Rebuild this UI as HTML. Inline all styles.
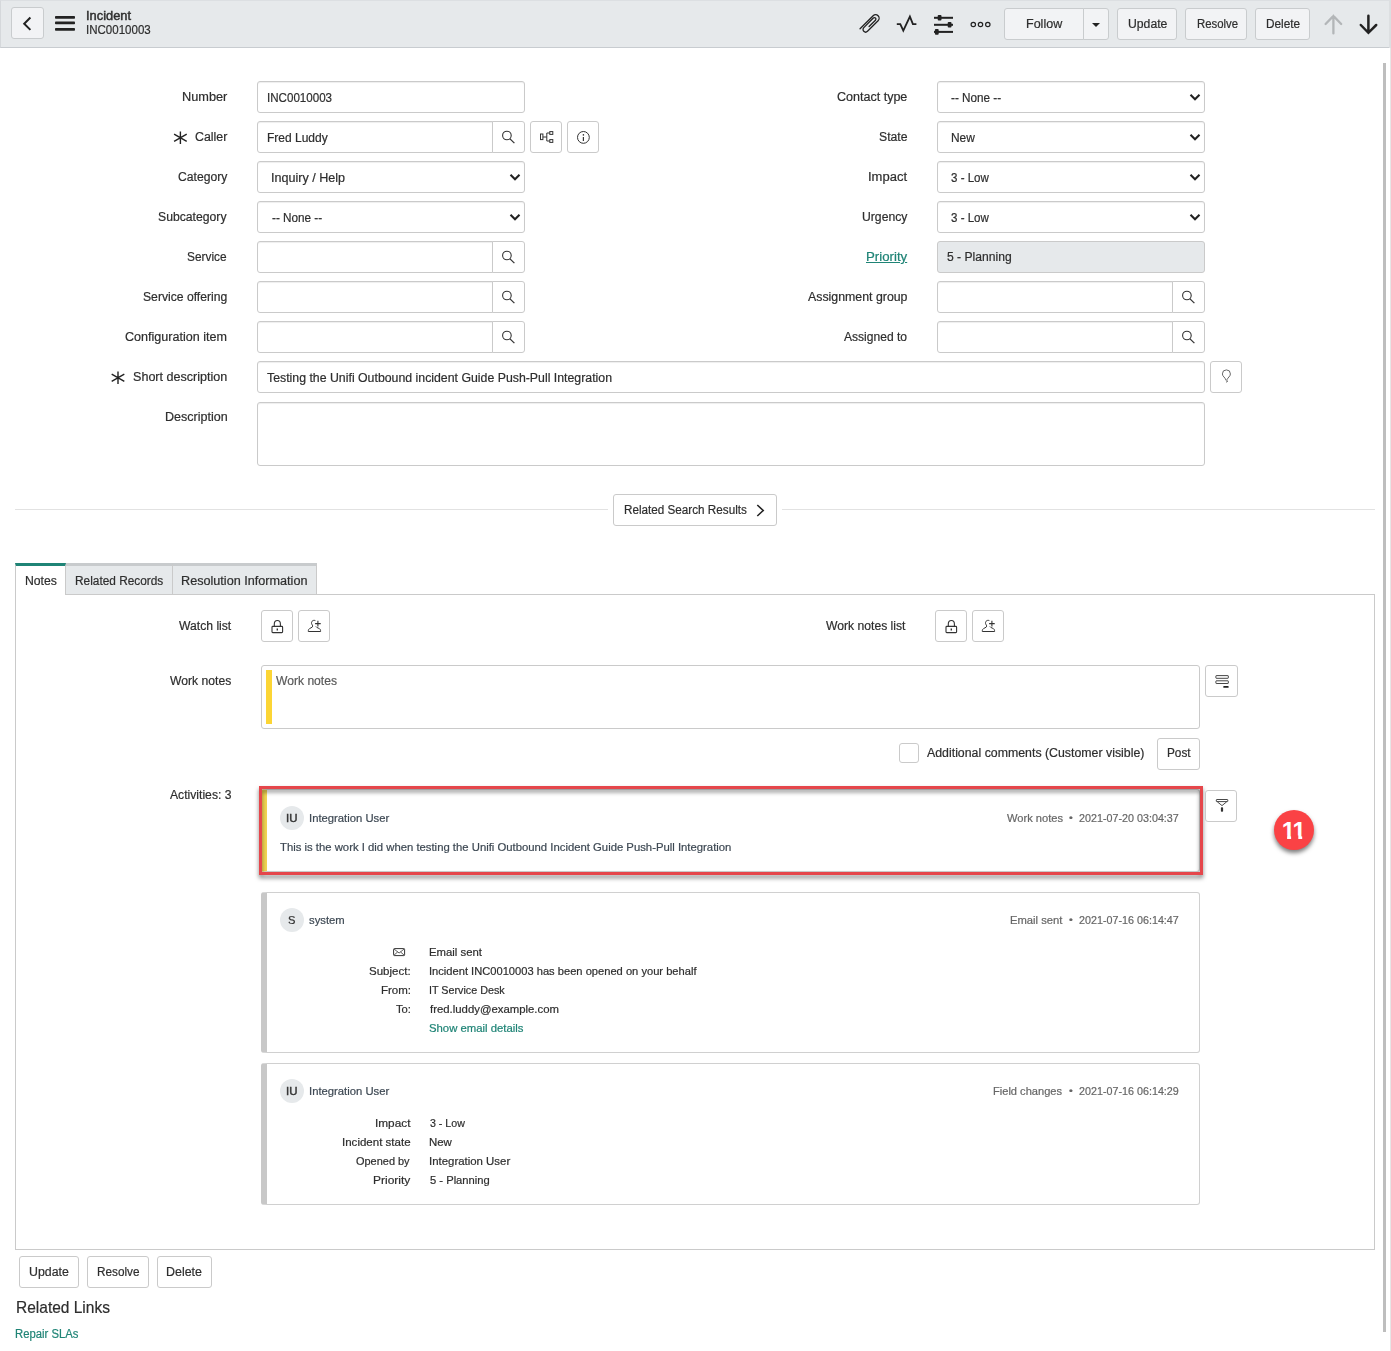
<!DOCTYPE html>
<html lang="en"><head><meta charset="utf-8"><title>Incident INC0010003</title>
<style>
html,body{margin:0;padding:0}
body{width:1391px;height:1351px;position:relative;overflow:hidden;background:#fff;font-family:"Liberation Sans",sans-serif;color:#2e2e2e}
.a{position:absolute;box-sizing:border-box}
.t{-webkit-text-stroke:0.2px currentColor;position:absolute;white-space:nowrap;line-height:1;transform-origin:0 0;display:block}
.hdr{left:0;top:0;width:1389px;height:48px;background:#e6e9eb;border-bottom:1px solid #c8ccd0;border-top:1px solid #dcdfe2;border-left:1px solid #d5d8db}
.hb{background:#f2f3f5;border:1px solid #c9ccce;border-radius:3px}
.in{background:#fff;border:1px solid #cacaca;border-radius:3px;box-shadow:inset 0 1px 1px rgba(0,0,0,.07)}
.ro{background:#e6e9eb;box-shadow:none}
.ad{background:#fff;border:1px solid #cacaca;border-radius:0 3px 3px 0}
.bt{background:#fff;border:1px solid #cacaca;border-radius:3px}
.tab{background:#e6e9eb;border-top:3px solid #c8cbcd;border-right:1px solid #cacaca;border-bottom:1px solid #cacaca}
.card{background:#fff;border:1px solid #d0d0d0;border-left:6px solid #c8c8c8;border-radius:3px}
.av{width:24px;height:24px;border-radius:12px;background:#e6e9eb}
svg{position:absolute;left:0;top:0;overflow:visible}

</style></head>
<body>
<div class="a hdr"></div>
<div class="a hb" style="left:11px;top:7px;width:33px;height:32px"></div>
<div class="a hb" style="left:1004px;top:8px;width:80px;height:32px;border-radius:3px 0 0 3px"></div>
<div class="a hb" style="left:1083px;top:8px;width:26px;height:32px;border-radius:0 3px 3px 0"></div>
<div class="a hb" style="left:1117px;top:8px;width:60px;height:32px"></div>
<div class="a hb" style="left:1185px;top:8px;width:62px;height:32px"></div>
<div class="a hb" style="left:1255px;top:8px;width:55px;height:32px"></div>
<div class="a in " style="left:257px;top:81px;width:268px;height:32px"></div>
<div class="a in" style="left:257px;top:121px;width:236px;height:32px;border-radius:3px 0 0 3px"></div>
<div class="a ad" style="left:492px;top:121px;width:33px;height:32px"></div>
<div class="a in " style="left:257px;top:161px;width:268px;height:32px"></div>
<div class="a in " style="left:257px;top:201px;width:268px;height:32px"></div>
<div class="a in" style="left:257px;top:241px;width:236px;height:32px;border-radius:3px 0 0 3px"></div>
<div class="a ad" style="left:492px;top:241px;width:33px;height:32px"></div>
<div class="a in" style="left:257px;top:281px;width:236px;height:32px;border-radius:3px 0 0 3px"></div>
<div class="a ad" style="left:492px;top:281px;width:33px;height:32px"></div>
<div class="a in" style="left:257px;top:321px;width:236px;height:32px;border-radius:3px 0 0 3px"></div>
<div class="a ad" style="left:492px;top:321px;width:33px;height:32px"></div>
<div class="a in " style="left:937px;top:81px;width:268px;height:32px"></div>
<div class="a in " style="left:937px;top:121px;width:268px;height:32px"></div>
<div class="a in " style="left:937px;top:161px;width:268px;height:32px"></div>
<div class="a in " style="left:937px;top:201px;width:268px;height:32px"></div>
<div class="a in ro" style="left:937px;top:241px;width:268px;height:32px"></div>
<div class="a in" style="left:937px;top:281px;width:236px;height:32px;border-radius:3px 0 0 3px"></div>
<div class="a ad" style="left:1172px;top:281px;width:33px;height:32px"></div>
<div class="a in" style="left:937px;top:321px;width:236px;height:32px;border-radius:3px 0 0 3px"></div>
<div class="a ad" style="left:1172px;top:321px;width:33px;height:32px"></div>
<div class="a in " style="left:257px;top:361px;width:948px;height:32px"></div>
<div class="a in" style="left:257px;top:402px;width:948px;height:64px"></div>
<div class="a bt" style="left:530px;top:121px;width:32px;height:32px"></div>
<div class="a bt" style="left:567px;top:121px;width:32px;height:32px"></div>
<div class="a bt" style="left:1210px;top:361px;width:32px;height:32px"></div>
<div class="a" style="left:15px;top:509px;width:1360px;height:1px;background:#e2e2e2"></div>
<div class="a" style="left:608px;top:494px;width:174px;height:32px;background:#fff"></div>
<div class="a bt" style="left:613px;top:494px;width:164px;height:32px"></div>
<div class="a" style="left:15px;top:594px;width:1360px;height:656px;border:1px solid #cacaca;background:#fff"></div>
<div class="a" style="left:15px;top:563px;width:51px;height:32px;background:#fff;border-top:3px solid #1f8476;border-left:1px solid #cacaca;border-right:1px solid #cacaca"></div>
<div class="a tab" style="left:66px;top:563px;width:107px;height:32px"></div>
<div class="a tab" style="left:173px;top:563px;width:144px;height:32px"></div>
<div class="a bt" style="left:261px;top:610px;width:32px;height:32px"></div>
<div class="a bt" style="left:298px;top:610px;width:32px;height:32px"></div>
<div class="a bt" style="left:935px;top:610px;width:32px;height:32px"></div>
<div class="a bt" style="left:972px;top:610px;width:32px;height:32px"></div>
<div class="a in" style="left:261px;top:665px;width:939px;height:64px;box-shadow:none"></div>
<div class="a" style="left:266px;top:670px;width:6px;height:54px;background:#fcd535"></div>
<div class="a bt" style="left:1205px;top:665px;width:33px;height:32px"></div>
<div class="a bt" style="left:899px;top:743px;width:20px;height:20px"></div>
<div class="a bt" style="left:1157px;top:738px;width:43px;height:32px"></div>
<div class="a card" style="left:261px;top:789px;width:939px;height:83px;border-left-color:#f2d452"></div>
<div class="a" style="left:259px;top:786px;width:944px;height:89px;border:3px solid #e5464b;filter:drop-shadow(0.5px 3px 2.2px rgba(0,0,0,.5))"></div>
<div class="a av" style="left:280px;top:806px"></div>
<div class="a bt" style="left:1205px;top:790px;width:32px;height:32px"></div>
<div class="a" style="left:1274px;top:810px;width:40px;height:40px;border-radius:20px;background:#fa4245;box-shadow:0 3px 4px rgba(0,0,0,.5)"></div>
<span class="t" style="left:1281.8px;top:819px;font-size:24px;font-weight:bold;color:#fff;letter-spacing:-1.2px;-webkit-text-stroke:0;clip-path:polygon(0 0,100% 0,100% 16.6px,20.4px 16.6px,20.4px 24px,16.5px 24px,16.5px 16.6px,9.3px 16.6px,9.3px 24px,5.3px 24px,5.3px 16.6px,0 16.6px);">11</span>
<div class="a card" style="left:261px;top:892px;width:939px;height:161px"></div>
<div class="a av" style="left:280px;top:908px"></div>
<div class="a card" style="left:261px;top:1063px;width:939px;height:142px"></div>
<div class="a av" style="left:280px;top:1079px"></div>
<div class="a bt" style="left:19px;top:1256px;width:60px;height:32px"></div>
<div class="a bt" style="left:87px;top:1256px;width:62px;height:32px"></div>
<div class="a bt" style="left:157px;top:1256px;width:55px;height:32px"></div>
<div class="a" style="left:1383px;top:63px;width:3px;height:1269px;background:#bebebe"></div>
<div class="a" style="left:1389px;top:0;width:2px;height:48px;background:#dcdfe1"></div>
<div class="a" style="left:1390px;top:48px;width:1px;height:1303px;background:#e6e6e6"></div>
<svg width="1391" height="1351" viewBox="0 0 1391 1351"><path d="M30.4,17.5 L24.2,23.7 L30.4,29.9" fill="none" stroke="#222" stroke-width="2"/><rect x="55" y="15.9" width="20" height="2.8" rx="0.8" fill="#222"/><rect x="55" y="21.5" width="20" height="2.8" rx="0.8" fill="#222"/><rect x="55" y="27.900000000000002" width="20" height="2.8" rx="0.8" fill="#222"/><g transform="translate(870.3,23.5) rotate(45)"><path d="M-3.5,11 V-7.5 A3.5,3.5 0 0 1 3.5,-7.5 V7.5 A2.6,2.6 0 0 1 -1.7,7.5 V-6 A1.5,1.5 0 0 1 1.3,-6 V3" fill="none" stroke="#222" stroke-width="1.3" stroke-linecap="round"/></g><path d="M896.8,24.1 H900.3 L903.3,30.6 L909.9,16.6 L912.9,24.1 H916.4" fill="none" stroke="#222" stroke-width="1.8" stroke-linejoin="miter"/><rect x="934" y="16.8" width="19" height="2" fill="#222"/><rect x="937.7" y="15.0" width="3.8" height="5.6" rx="1" fill="#222"/><rect x="934" y="23.8" width="19" height="2" fill="#222"/><rect x="947.7" y="22.0" width="3.8" height="5.6" rx="1" fill="#222"/><rect x="934" y="30.9" width="19" height="2" fill="#222"/><rect x="934.9" y="29.099999999999998" width="3.8" height="5.6" rx="1" fill="#222"/><circle cx="973.3" cy="24.5" r="2.2" fill="none" stroke="#222" stroke-width="1.2"/><circle cx="980.5" cy="24.5" r="2.2" fill="none" stroke="#222" stroke-width="1.2"/><circle cx="987.8" cy="24.5" r="2.2" fill="none" stroke="#222" stroke-width="1.2"/><path d="M1092,23 H1100 L1096,27 Z" fill="#222"/><path d="M1333.4,33.4 V16 M1325.6,24 L1333.4,16 L1341.2,24" fill="none" stroke="#b3b6b8" stroke-width="2.3" stroke-linecap="round" stroke-linejoin="miter"/><path d="M1368.4,15.8 V32.6 M1360.8,25 L1368.4,32.8 L1376.2,25" fill="none" stroke="#222" stroke-width="2.5" stroke-linecap="round" stroke-linejoin="miter"/><circle cx="506.9" cy="135.5" r="4.3" fill="none" stroke="#333" stroke-width="1.1"/><path d="M510.0,138.9 L514.4,143.1" stroke="#333" stroke-width="1.3" fill="none"/><path d="M510.5,174.8 L515,179.2 L519.5,174.8" fill="none" stroke="#222" stroke-width="2.1"/><path d="M510.5,214.8 L515,219.2 L519.5,214.8" fill="none" stroke="#222" stroke-width="2.1"/><circle cx="506.9" cy="255.5" r="4.3" fill="none" stroke="#333" stroke-width="1.1"/><path d="M510.0,258.9 L514.4,263.1" stroke="#333" stroke-width="1.3" fill="none"/><circle cx="506.9" cy="295.5" r="4.3" fill="none" stroke="#333" stroke-width="1.1"/><path d="M510.0,298.9 L514.4,303.1" stroke="#333" stroke-width="1.3" fill="none"/><circle cx="506.9" cy="335.5" r="4.3" fill="none" stroke="#333" stroke-width="1.1"/><path d="M510.0,338.9 L514.4,343.1" stroke="#333" stroke-width="1.3" fill="none"/><path d="M1190.5,94.8 L1195,99.2 L1199.5,94.8" fill="none" stroke="#222" stroke-width="2.1"/><path d="M1190.5,134.8 L1195,139.2 L1199.5,134.8" fill="none" stroke="#222" stroke-width="2.1"/><path d="M1190.5,174.8 L1195,179.2 L1199.5,174.8" fill="none" stroke="#222" stroke-width="2.1"/><path d="M1190.5,214.8 L1195,219.2 L1199.5,214.8" fill="none" stroke="#222" stroke-width="2.1"/><circle cx="1186.9" cy="295.5" r="4.3" fill="none" stroke="#333" stroke-width="1.1"/><path d="M1190.0,298.9 L1194.4,303.1" stroke="#333" stroke-width="1.3" fill="none"/><circle cx="1186.9" cy="335.5" r="4.3" fill="none" stroke="#333" stroke-width="1.1"/><path d="M1190.0,338.9 L1194.4,343.1" stroke="#333" stroke-width="1.3" fill="none"/><g fill="none" stroke="#333" stroke-width="1"><rect x="540.5" y="134" width="2.4" height="5.6"/><rect x="549.8" y="131.6" width="3" height="2.8"/><rect x="549.8" y="139.6" width="3" height="2.8"/><path d="M542.9,137 H546.8 M549.8,133 H546.8 V141 H549.8"/></g><circle cx="583.4" cy="137.4" r="5.9" fill="none" stroke="#333" stroke-width="1"/><path d="M583.4,137 V141" stroke="#333" stroke-width="1.2"/><circle cx="583.4" cy="134.9" r="0.8" fill="#333"/><path d="M1225.6,379.6 C1225.4,377.5 1222.4,376.6 1222.4,373.9 A4,4 0 0 1 1230.4,373.9 C1230.4,376.6 1227.6,377.5 1227.2,379.6 M1225.3,379.7 L1227.4,380.4 M1226,382.2 L1227.9,381.2" fill="none" stroke="#555" stroke-width="0.9"/><g fill="none" stroke="#333" stroke-width="1.1"><rect x="272" y="626.4" width="10.6" height="6.2" rx="0.8"/><path d="M274.3,626.4 V624 A3,3.4 0 0 1 280.4,624 V626.4"/><path d="M277.3,628.4 V630.6" stroke-width="1.4"/></g><g fill="none" stroke="#333" stroke-width="1" transform="translate(298,610)"><path d="M17.4,10.6 C14.4,9.5 12.8,12.2 13.8,14.2 C14.2,15 14.7,15.3 14.7,16.1 C14.7,17.9 11.4,17.8 10.6,19.6 C10.3,20.3 10.3,20.9 10.3,21.5 H22.6 C22.6,20.9 22.6,20.3 22.3,19.6 C21.6,18 18.6,18 17.9,16.5"/><path d="M17.1,13.6 H22.7 M19.9,10.8 V16.4" stroke-width="1.1"/></g><g fill="none" stroke="#333" stroke-width="1.1"><rect x="946" y="626.4" width="10.6" height="6.2" rx="0.8"/><path d="M948.3,626.4 V624 A3,3.4 0 0 1 954.4,624 V626.4"/><path d="M951.3,628.4 V630.6" stroke-width="1.4"/></g><g fill="none" stroke="#333" stroke-width="1" transform="translate(972,610)"><path d="M17.4,10.6 C14.4,9.5 12.8,12.2 13.8,14.2 C14.2,15 14.7,15.3 14.7,16.1 C14.7,17.9 11.4,17.8 10.6,19.6 C10.3,20.3 10.3,20.9 10.3,21.5 H22.6 C22.6,20.9 22.6,20.3 22.3,19.6 C21.6,18 18.6,18 17.9,16.5"/><path d="M17.1,13.6 H22.7 M19.9,10.8 V16.4" stroke-width="1.1"/></g><g fill="none" stroke="#333" stroke-width="0.9"><rect x="1215.9" y="675.6" width="12.4" height="2.7" rx="0.4"/><rect x="1215.9" y="680.8" width="12.4" height="2.7" rx="0.4"/></g><rect x="1223.3" y="685.9" width="5.3" height="1.9" rx="0.5" fill="#222"/><g fill="none" stroke="#333" stroke-width="0.9"><rect x="1216.3" y="799.5" width="11.5" height="2.1" rx="0.5"/><path d="M1217.3,801.8 L1222,805.6 L1226.7,801.8"/></g><rect x="1220.9" y="807.2" width="2.2" height="4.6" rx="0.8" fill="#333"/><path d="M757.3,505 L763.2,510.5 L757.3,516" fill="none" stroke="#222" stroke-width="1.6"/><path d="M180.40,131.40 L180.40,144.00 M186.72,134.05 L174.08,141.35 M186.72,141.35 L174.08,134.05 " stroke="#222" stroke-width="1.4" fill="none"/><path d="M118.00,371.40 L118.00,384.00 M124.32,374.05 L111.68,381.35 M124.32,381.35 L111.68,374.05 " stroke="#222" stroke-width="1.4" fill="none"/><g fill="none" stroke="#333" stroke-width="1"><rect x="393.6" y="948.6" width="11" height="7" rx="0.8"/><path d="M394,949 L399.1,953 L404.2,949 M394,955.2 L397.6,952 M404.2,955.2 L400.6,952" stroke-width="0.8"/></g></svg>
<span class="t" style="left:85.82px;top:10px;font-size:12px;-webkit-text-stroke:0.42px currentColor;transform:scaleX(1.0710);">Incident</span>
<span class="t" style="left:85.94px;top:24px;font-size:12px;transform:scaleX(0.9604);">INC0010003</span>
<span class="t" style="left:1026.06px;top:18px;font-size:12px;transform:scaleX(1.0441);">Follow</span>
<span class="t" style="left:1128.38px;top:18px;font-size:12px;transform:scaleX(1.0182);">Update</span>
<span class="t" style="left:1196.65px;top:18px;font-size:12px;transform:scaleX(0.9481);">Resolve</span>
<span class="t" style="left:1266.11px;top:18px;font-size:12px;transform:scaleX(0.9846);">Delete</span>
<span class="t" style="left:181.84px;top:91px;font-size:12px;transform:scaleX(1.0629);">Number</span>
<span class="t" style="left:194.88px;top:131px;font-size:12px;transform:scaleX(1.0312);">Caller</span>
<span class="t" style="left:177.69px;top:171px;font-size:12px;transform:scaleX(1.0127);">Category</span>
<span class="t" style="left:158.49px;top:211px;font-size:12px;transform:scaleX(1.0168);">Subcategory</span>
<span class="t" style="left:187.41px;top:251px;font-size:12px;transform:scaleX(0.9887);">Service</span>
<span class="t" style="left:142.99px;top:291px;font-size:12px;transform:scaleX(1.0136);">Service offering</span>
<span class="t" style="left:125.27px;top:331px;font-size:12px;transform:scaleX(1.0470);">Configuration item</span>
<span class="t" style="left:132.98px;top:371px;font-size:12px;transform:scaleX(1.0476);">Short description</span>
<span class="t" style="left:164.56px;top:411px;font-size:12px;transform:scaleX(1.0454);">Description</span>
<span class="t" style="left:837.17px;top:91px;font-size:12px;transform:scaleX(1.0438);">Contact type</span>
<span class="t" style="left:878.99px;top:131px;font-size:12px;transform:scaleX(1.0168);">State</span>
<span class="t" style="left:868.01px;top:171px;font-size:12px;transform:scaleX(1.0838);">Impact</span>
<span class="t" style="left:861.59px;top:211px;font-size:12px;transform:scaleX(1.0164);">Urgency</span>
<span class="t" style="left:865.81px;top:251px;font-size:12px;color:#1f8476;transform:scaleX(1.1033);text-decoration:underline;text-underline-offset:1px;">Priority</span>
<span class="t" style="left:808.00px;top:291px;font-size:12px;transform:scaleX(1.0286);">Assignment group</span>
<span class="t" style="left:844.40px;top:331px;font-size:12px;transform:scaleX(1.0059);">Assigned to</span>
<span class="t" style="left:267.14px;top:92px;font-size:12px;transform:scaleX(0.9649);">INC0010003</span>
<span class="t" style="left:267.30px;top:132px;font-size:12px;transform:scaleX(0.9999);">Fred Luddy</span>
<span class="t" style="left:271.15px;top:172px;font-size:12px;transform:scaleX(1.0474);">Inquiry / Help</span>
<span class="t" style="left:271.61px;top:212px;font-size:12px;transform:scaleX(0.9773);">-- None --</span>
<span class="t" style="left:951.11px;top:92px;font-size:12px;transform:scaleX(0.9773);">-- None --</span>
<span class="t" style="left:951.41px;top:132px;font-size:12px;transform:scaleX(0.9940);">New</span>
<span class="t" style="left:950.92px;top:172px;font-size:12px;transform:scaleX(0.9619);">3 - Low</span>
<span class="t" style="left:950.92px;top:212px;font-size:12px;transform:scaleX(0.9619);">3 - Low</span>
<span class="t" style="left:946.70px;top:251px;font-size:12px;transform:scaleX(1.0100);">5 - Planning</span>
<span class="t" style="left:267.09px;top:372px;font-size:12px;transform:scaleX(1.0262);">Testing the Unifi Outbound incident Guide Push-Pull Integration</span>
<span class="t" style="left:623.72px;top:504px;font-size:12px;transform:scaleX(0.9746);">Related Search Results</span>
<span class="t" style="left:24.58px;top:575px;font-size:12px;transform:scaleX(1.0184);">Notes</span>
<span class="t" style="left:75.11px;top:575px;font-size:12px;transform:scaleX(0.9878);">Related Records</span>
<span class="t" style="left:181.35px;top:575px;font-size:12px;transform:scaleX(1.0533);">Resolution Information</span>
<span class="t" style="left:178.80px;top:620px;font-size:12px;transform:scaleX(1.0130);">Watch list</span>
<span class="t" style="left:825.60px;top:620px;font-size:12px;transform:scaleX(1.0123);">Work notes list</span>
<span class="t" style="left:170.00px;top:675px;font-size:12px;transform:scaleX(1.0122);">Work notes</span>
<span class="t" style="left:275.70px;top:675px;font-size:12px;color:#5a5a5a;transform:scaleX(1.0088);">Work notes</span>
<span class="t" style="left:927.00px;top:747px;font-size:12px;transform:scaleX(1.0284);">Additional comments (Customer visible)</span>
<span class="t" style="left:1166.51px;top:747px;font-size:12px;transform:scaleX(0.9836);">Post</span>
<span class="t" style="left:169.50px;top:789px;font-size:12px;transform:scaleX(1.0131);">Activities: 3</span>
<span class="t" style="left:285.66px;top:813px;font-size:11px;color:#333;-webkit-text-stroke:0.42px currentColor;transform:scaleX(1.0376);">IU</span>
<span class="t" style="left:308.98px;top:813px;font-size:11px;color:#3d4853;transform:scaleX(1.0247);">Integration User</span>
<span class="t" style="left:280.29px;top:842px;font-size:11px;color:#3d4853;transform:scaleX(1.0281);">This is the work I did when testing the Unifi Outbound Incident Guide Push-Pull Integration</span>
<span class="t" style="left:1006.70px;top:813px;font-size:11px;color:#666;transform:scaleX(1.0122);">Work notes</span>
<span class="t" style="left:1068.94px;top:814px;font-size:9px;color:#666;transform:scaleX(1.2000);">•</span>
<span class="t" style="left:1079.01px;top:813px;font-size:11px;color:#666;transform:scaleX(0.9770);">2021-07-20 03:04:37</span>
<span class="t" style="left:288.39px;top:915px;font-size:11px;color:#333;transform:scaleX(1.0156);">S</span>
<span class="t" style="left:308.69px;top:915px;font-size:11px;color:#3d4853;transform:scaleX(1.0244);">system</span>
<span class="t" style="left:1009.78px;top:915px;font-size:11px;color:#666;transform:scaleX(1.0219);">Email sent</span>
<span class="t" style="left:1068.94px;top:916px;font-size:9px;color:#666;transform:scaleX(1.2000);">•</span>
<span class="t" style="left:1079.01px;top:915px;font-size:11px;color:#666;transform:scaleX(0.9770);">2021-07-16 06:14:47</span>
<span class="t" style="left:429.07px;top:947px;font-size:11px;transform:scaleX(1.0318);">Email sent</span>
<span class="t" style="left:369.38px;top:966px;font-size:11px;transform:scaleX(1.0473);">Subject:</span>
<span class="t" style="left:428.99px;top:966px;font-size:11px;transform:scaleX(1.0124);">Incident INC0010003 has been opened on your behalf</span>
<span class="t" style="left:380.96px;top:985px;font-size:11px;transform:scaleX(1.0460);">From:</span>
<span class="t" style="left:429.02px;top:985px;font-size:11px;transform:scaleX(0.9775);">IT Service Desk</span>
<span class="t" style="left:396.00px;top:1004px;font-size:11px;transform:scaleX(1.0209);">To:</span>
<span class="t" style="left:429.90px;top:1004px;font-size:11px;transform:scaleX(1.0328);">fred.luddy@example.com</span>
<span class="t" style="left:429.48px;top:1023px;font-size:11px;color:#1f8476;transform:scaleX(1.0307);">Show email details</span>
<span class="t" style="left:285.66px;top:1086px;font-size:11px;color:#333;-webkit-text-stroke:0.42px currentColor;transform:scaleX(1.0376);">IU</span>
<span class="t" style="left:308.98px;top:1086px;font-size:11px;color:#3d4853;transform:scaleX(1.0247);">Integration User</span>
<span class="t" style="left:993.49px;top:1086px;font-size:11px;color:#666;transform:scaleX(1.0076);">Field changes</span>
<span class="t" style="left:1068.94px;top:1087px;font-size:9px;color:#666;transform:scaleX(1.2000);">•</span>
<span class="t" style="left:1079.01px;top:1086px;font-size:11px;color:#666;transform:scaleX(0.9770);">2021-07-16 06:14:29</span>
<span class="t" style="left:374.63px;top:1118px;font-size:11px;transform:scaleX(1.0734);">Impact</span>
<span class="t" style="left:429.61px;top:1118px;font-size:11px;transform:scaleX(0.9656);">3 - Low</span>
<span class="t" style="left:341.85px;top:1137px;font-size:11px;transform:scaleX(1.0482);">Incident state</span>
<span class="t" style="left:429.06px;top:1137px;font-size:11px;transform:scaleX(1.0396);">New</span>
<span class="t" style="left:356.40px;top:1156px;font-size:11px;transform:scaleX(0.9959);">Opened by</span>
<span class="t" style="left:428.96px;top:1156px;font-size:11px;transform:scaleX(1.0376);">Integration User</span>
<span class="t" style="left:372.72px;top:1175px;font-size:11px;transform:scaleX(1.0893);">Priority</span>
<span class="t" style="left:429.59px;top:1175px;font-size:11px;transform:scaleX(1.0175);">5 - Planning</span>
<span class="t" style="left:29.07px;top:1266px;font-size:12px;transform:scaleX(1.0289);">Update</span>
<span class="t" style="left:96.62px;top:1266px;font-size:12px;transform:scaleX(0.9814);">Resolve</span>
<span class="t" style="left:166.07px;top:1266px;font-size:12px;transform:scaleX(1.0356);">Delete</span>
<span class="t" style="left:15.79px;top:1300px;font-size:16.6px;transform:scaleX(0.9343);">Related Links</span>
<span class="t" style="left:15.45px;top:1328px;font-size:12px;color:#1f8476;transform:scaleX(0.9415);">Repair SLAs</span>
</body></html>
